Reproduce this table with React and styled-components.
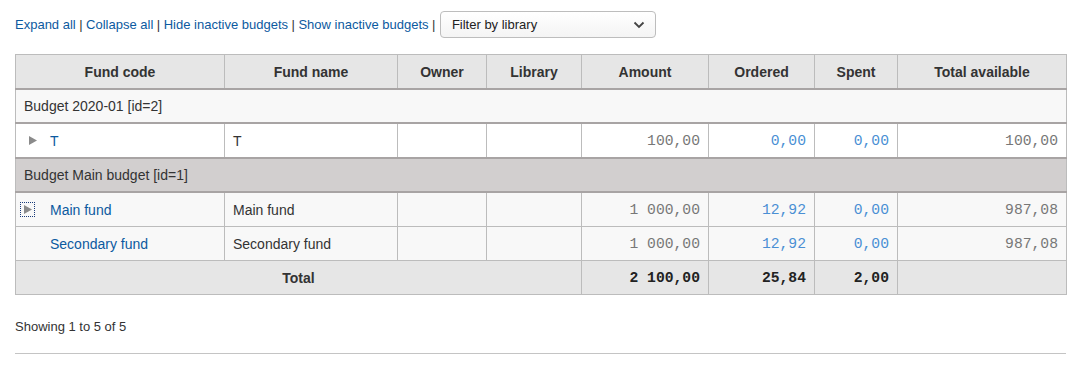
import React from 'react';
import styled, { createGlobalStyle } from 'styled-components';

const GlobalStyle = createGlobalStyle`
  body {
    margin: 0;
    background: #ffffff;
    font-family: "Liberation Sans", Arial, sans-serif;
    color: #333;
  }
`;

const Page = styled.main`
  padding: 11px 6px 0 15px;
`;

const Toolbar = styled.div`
  display: flex;
  align-items: center;
  font-size: 13px;
  height: 27px;
  margin-bottom: 16px;
`;

const ToolLink = styled.a`
  color: #0c5aa0;
  text-decoration: none;
  cursor: pointer;
`;

const Sep = styled.span`
  color: #333;
  margin: 0 3.5px;
`;

const SelectBox = styled.div`
  display: flex;
  align-items: center;
  justify-content: space-between;
  box-sizing: border-box;
  width: 216px;
  height: 27px;
  margin-left: 1px;
  padding: 0 10px 0 11px;
  border: 1px solid #bdbdbd;
  border-radius: 4px;
  background: linear-gradient(#ffffff, #f4f4f4);
  color: #222;
  font-size: 13px;
`;

const Table = styled.table`
  border-collapse: collapse;
  width: 1051px;
  table-layout: fixed;
  font-size: 14px;
  border: 1px solid #bcbcbc;
`;

const Th = styled.th`
  background: #e6e6e6;
  color: #333;
  font-weight: bold;
  height: 33px;
  padding: 0 10px;
  border: 1px solid #bcbcbc;
  border-bottom: 2px solid #a8a4a4;
  text-align: center;
`;

const GroupRow = styled.tr`
  td {
    background: ${p => (p.$dark ? '#d2cfcf' : '#f8f8f8')};
    height: 32px;
    padding: 0 8px;
    border-top: 2px solid #a8a4a4;
    border-bottom: 2px solid #a8a4a4;
    color: #333;
  }
`;

const FundRow = styled.tr`
  td {
    background: ${p => (p.$alt ? '#f8f8f8' : '#ffffff')};
  }
`;

const Td = styled.td`
  height: 33px;
  padding: 0 8px;
  border: 1px solid #bcbcbc;
  text-align: ${p => (p.$num ? 'right' : p.$center ? 'center' : 'left')};
  white-space: nowrap;
`;

const CodeTd = styled(Td)`
  padding-left: 4px;
`;

const TotalRow = styled.tr`
  td {
    background: #e6e6e6;
    font-weight: bold;
    color: #333;
  }
`;

const Num = styled.span`
  font-family: "Liberation Mono", "Courier New", monospace;
  font-size: 14.7px;
  color: ${p => (p.$link ? '#4a8fd4' : p.$bold ? '#222' : '#777')};
  font-weight: ${p => (p.$bold ? 'bold' : 'normal')};
`;

const CodeCell = styled.div`
  display: flex;
  align-items: center;
  padding-left: ${p => (p.$indent ? '30px' : '0')};
`;

const Expander = styled.span`
  display: inline-flex;
  align-items: center;
  justify-content: center;
  width: 15px;
  height: 15px;
  box-sizing: border-box;
  margin: ${p => (p.$focus ? '0 15px 0 0' : '0 10px 0 5px')};
  outline: ${p => (p.$focus ? '1px dotted #1a3c7a' : 'none')};
  outline-offset: -1px;
`;

const FundLink = styled.a`
  color: #0c5aa0;
  text-decoration: none;
`;

const Info = styled.div`
  font-size: 13px;
  color: #333;
  margin-top: 24px;
`;

const Rule = styled.hr`
  width: 1051px;
  margin: 19px 0 0;
  border: 0;
  border-top: 1px solid #c4c4c4;
`;

const cols = [209, 173, 89, 95, 127, 106, 83, 169];
const heads = ['Fund code', 'Fund name', 'Owner', 'Library', 'Amount', 'Ordered', 'Spent', 'Total available'];

const Chevron = () => (
  <svg width="12" height="8" viewBox="0 0 12 8">
    <path d="M1.5 1.5 L6 6 L10.5 1.5" fill="none" stroke="#444" strokeWidth="1.8" />
  </svg>
);

const Triangle = () => (
  <svg width="8" height="9" viewBox="0 0 8 9">
    <path d="M0 0 L8 4.5 L0 9 Z" fill="#8a8a8a" />
  </svg>
);

const Fund = ({ code, name, amount, ordered, spent, avail, alt, expander, focus }) => (
  <FundRow $alt={alt}>
    <CodeTd>
      <CodeCell $indent={!expander}>
        {expander && <Expander $focus={focus}><Triangle /></Expander>}
        <FundLink>{code}</FundLink>
      </CodeCell>
    </CodeTd>
    <Td>{name}</Td>
    <Td />
    <Td />
    <Td $num><Num>{amount}</Num></Td>
    <Td $num><Num $link>{ordered}</Num></Td>
    <Td $num><Num $link>{spent}</Num></Td>
    <Td $num><Num>{avail}</Num></Td>
  </FundRow>
);

export default function App() {
  return (
    <Page>
      <GlobalStyle />
      <Toolbar>
        <ToolLink>Expand all</ToolLink>
        <Sep>|</Sep>
        <ToolLink>Collapse all</ToolLink>
        <Sep>|</Sep>
        <ToolLink>Hide inactive budgets</ToolLink>
        <Sep>|</Sep>
        <ToolLink>Show inactive budgets</ToolLink>
        <Sep>|</Sep>
        <SelectBox>
          <span>Filter by library</span>
          <Chevron />
        </SelectBox>
      </Toolbar>
      <Table>
        <colgroup>
          {cols.map((w, i) => <col key={i} style={{ width: w }} />)}
        </colgroup>
        <thead>
          <tr>
            {heads.map(h => <Th key={h}>{h}</Th>)}
          </tr>
        </thead>
        <tbody>
          <GroupRow>
            <td colSpan={8}>Budget 2020-01 [id=2]</td>
          </GroupRow>
          <Fund code="T" name="T" amount="100,00" ordered="0,00" spent="0,00" avail="100,00" expander />
          <GroupRow $dark>
            <td colSpan={8}>Budget Main budget [id=1]</td>
          </GroupRow>
          <Fund code="Main fund" name="Main fund" amount="1 000,00" ordered="12,92" spent="0,00" avail="987,08" alt expander focus />
          <Fund code="Secondary fund" name="Secondary fund" amount="1 000,00" ordered="12,92" spent="0,00" avail="987,08" alt />
          <TotalRow>
            <Td colSpan={4} $center>Total</Td>
            <Td $num><Num $bold>2 100,00</Num></Td>
            <Td $num><Num $bold>25,84</Num></Td>
            <Td $num><Num $bold>2,00</Num></Td>
            <Td />
          </TotalRow>
        </tbody>
      </Table>
      <Info>Showing 1 to 5 of 5</Info>
      <Rule />
    </Page>
  );
}
